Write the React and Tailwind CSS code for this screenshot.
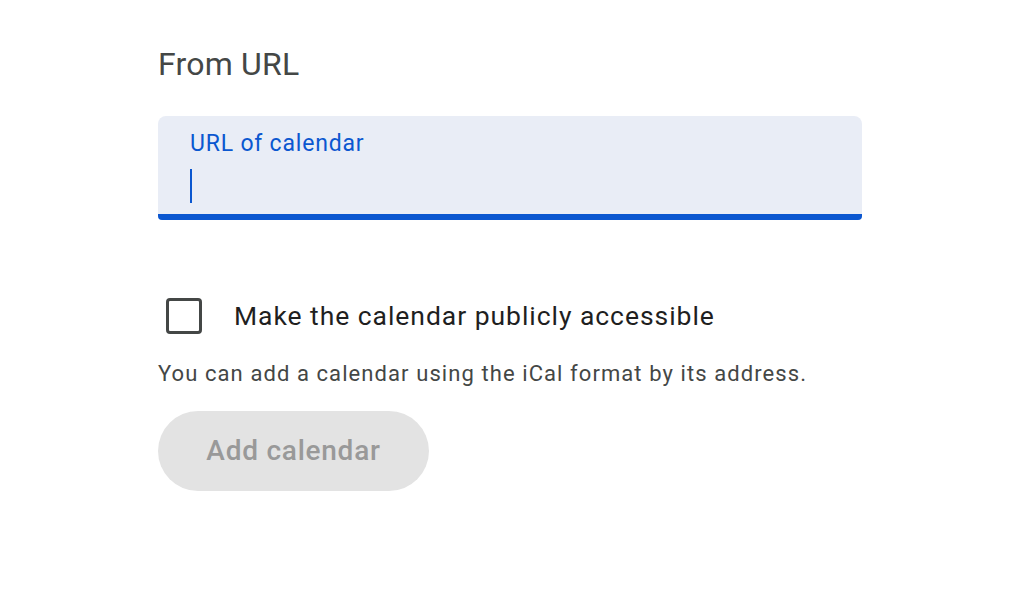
import React from 'react';

const App = () => {
  return (
    <div className="w-[1026px] h-[590px] bg-white font-['Roboto',sans-serif]">
      <div className="pl-[158px] pt-[44px] w-[862px]">
        {/* Title */}
        <h2 className="text-[32px] leading-[40px] tracking-[0.2px] text-[#444746]">From URL</h2>

        {/* URL field */}
        <div className="mt-[32px] w-[704px] h-[104px] rounded-t-[8px] rounded-b-[4px] bg-[#e9edf6] border-b-[6px] border-[#0b57d0] pl-[32px] pt-[14px]">
          <div className="text-[23px] leading-[28px] tracking-[0.8px] text-[#0b57d0]">URL of calendar</div>
          <div className="mt-[11px] w-[2px] h-[34px] bg-[#0b57d0]" />
        </div>

        {/* Checkbox row */}
        <div className="mt-[78px] flex items-center">
          <div className="ml-[8px] w-[36px] h-[36px] rounded-[4px] border-[3px] border-[#444746]" />
          <span className="ml-[32px] text-[26.5px] leading-[36px] tracking-[0.95px] text-[#1f1f1f]">Make the calendar publicly accessible</span>
        </div>

        {/* Helper text */}
        <p className="mt-[24px] text-[22px] leading-[32px] tracking-[1.08px] text-[#444746]">
          You can add a calendar using the iCal format by its address.
        </p>

        {/* Button */}
        <button className="mt-[21px] w-[271px] h-[80px] rounded-full bg-[#e3e3e3] text-[28px] font-medium tracking-[0.75px] text-[#999999]">
          Add calendar
        </button>
      </div>
    </div>
  );
};

export default App;
